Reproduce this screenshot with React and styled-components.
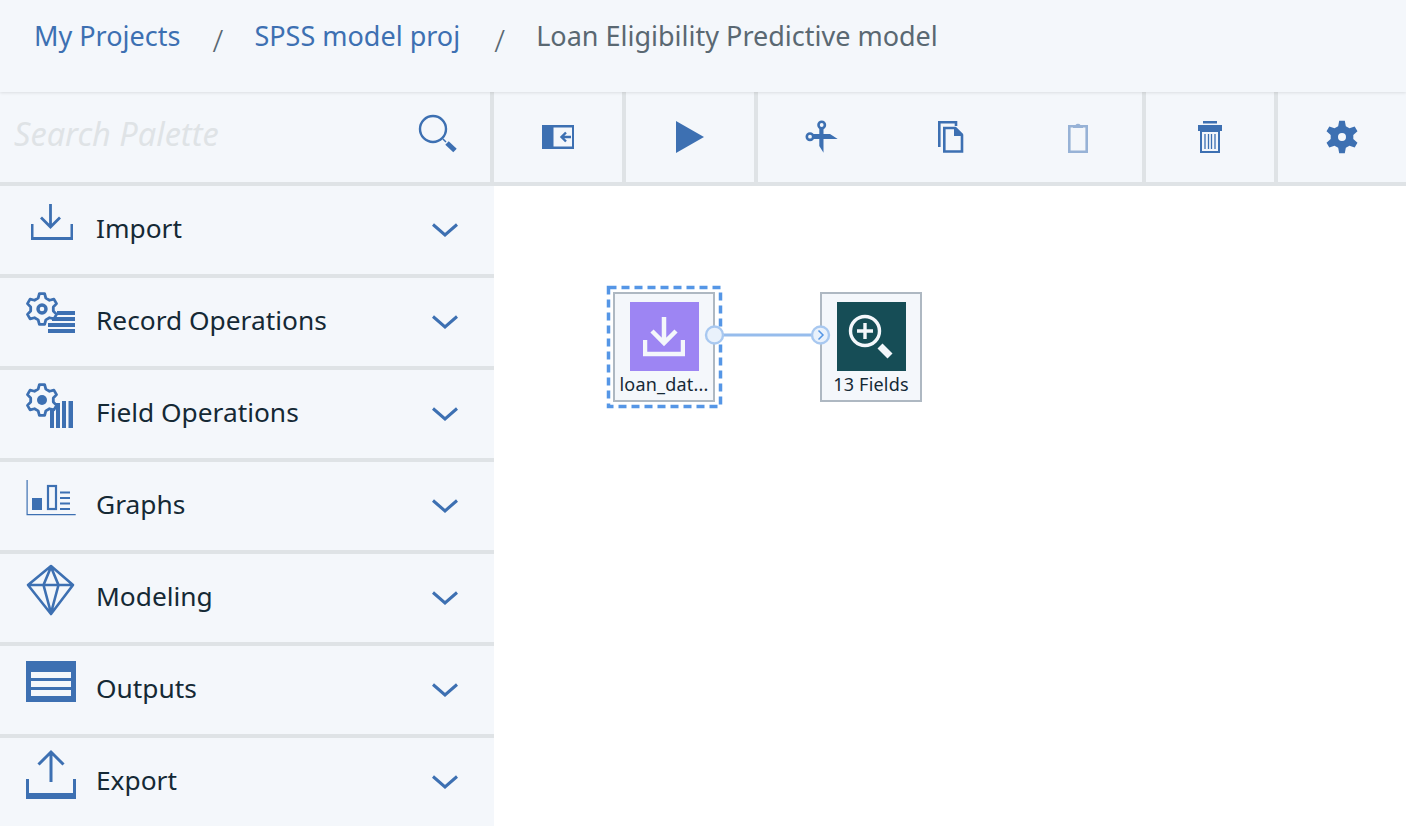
import React from 'react'
import styled, { createGlobalStyle } from 'styled-components'

const BLUE = '#3d70b2'
const PANEL = '#f4f7fb'
const LINE = '#dfe3e6'

const GlobalStyle = createGlobalStyle`
  html, body {
    margin: 0;
    padding: 0;
    background: #fff;
    font-family: "Noto Sans", "Open Sans", sans-serif;
    color: #152935;
  }
`

const Page = styled.div`
  width: 1406px;
  height: 826px;
  overflow: hidden;
  display: flex;
  flex-direction: column;
  background: #fff;
`

const Breadcrumbs = styled.header`
  height: 92px;
  flex: none;
  box-sizing: border-box;
  display: flex;
  align-items: flex-start;
  padding: 17px 0 0 34px;
  background: ${PANEL};
  box-shadow: 0 1px 3px rgba(0, 0, 0, 0.1);
  position: relative;
  z-index: 2;
  font-size: 27px;
  line-height: 38px;
`

const Crumb = styled.a`
  color: ${p => (p.$current ? '#5a6872' : BLUE)};
  white-space: nowrap;
`

const Slash = styled.span`
  width: 42px;
  margin-left: ${p => p.$left}px;
  padding-top: 4px;
  font-size: 31px;
  font-weight: 300;
  color: #5a6872;
`

const Body = styled.div`
  flex: 1;
  display: flex;
  min-height: 0;
`

const Palette = styled.aside`
  width: 494px;
  flex: none;
  display: flex;
  flex-direction: column;
`

const SearchBar = styled.div`
  height: 94px;
  flex: none;
  box-sizing: border-box;
  display: flex;
  align-items: center;
  justify-content: space-between;
  padding: 0 32px 0 14px;
  background: ${PANEL};
  border-bottom: 4px solid ${LINE};
  border-right: 4px solid ${LINE};
`

const SearchHint = styled.span`
  font-size: 32.5px;
  font-style: italic;
  color: ${LINE};
  margin-top: -8px;
`

const SearchIcon = styled.svg`
  width: 40px;
  height: 40px;
  flex: none;
  overflow: visible;
  fill: none;
  stroke: ${BLUE};
`

const Row = styled.div`
  height: 92px;
  flex: none;
  box-sizing: border-box;
  display: flex;
  align-items: center;
  padding: 0 36px 0 24px;
  background: ${PANEL};
  border-bottom: 4px solid ${LINE};
  &:last-child {
    border-bottom-color: ${PANEL};
  }
`

const RowIcon = styled.svg`
  width: 56px;
  height: 60px;
  flex: none;
  overflow: visible;
  fill: ${BLUE};
`

const RowLabel = styled.span`
  flex: 1;
  margin: 0 0 4px 16px;
  font-size: 26.3px;
  line-height: 38px;
`

const Work = styled.main`
  flex: 1;
  display: flex;
  flex-direction: column;
  min-width: 0;
`

const Toolbar = styled.div`
  height: 94px;
  flex: none;
  box-sizing: border-box;
  display: flex;
  background: ${PANEL};
  border-bottom: 4px solid ${LINE};
`

const ToolGroup = styled.div`
  display: flex;
  flex: none;
  & + & {
    border-left: 4px solid ${LINE};
  }
`

const ToolButton = styled.button`
  width: 128px;
  height: 90px;
  padding: 0;
  border: 0;
  background: transparent;
  display: flex;
  align-items: center;
  justify-content: center;
`

const ToolIcon = styled.svg`
  width: 40px;
  height: 40px;
  fill: ${BLUE};
  opacity: ${p => (p.$disabled ? 0.5 : 1)};
`

const Canvas = styled.div`
  flex: 1;
  position: relative;
  background: #fff;
`

const Wires = styled.svg`
  position: absolute;
  left: 0;
  top: 0;
  width: 912px;
  height: 640px;
  pointer-events: none;
  z-index: 1;
`

const Node = styled.div`
  position: absolute;
  left: ${p => p.$x}px;
  top: 106px;
  width: 102px;
  height: 110px;
  box-sizing: border-box;
  border: 2px solid #aeb8c2;
  background: ${PANEL};
  display: flex;
  flex-direction: column;
  align-items: center;
  padding-top: 8px;
`

const NodeImage = styled.div`
  width: 69px;
  height: 69px;
  flex: none;
  background: ${p => p.$color};
  display: flex;
  align-items: center;
  justify-content: center;
`

const NodeLabel = styled.span`
  font-size: 18px;
  line-height: 24px;
  letter-spacing: 0.2px;
  margin-top: 1px;
  white-space: nowrap;
`

const Chevron = () => (
  <svg width="26" height="14" viewBox="0 0 26 14" fill="none" stroke={BLUE} strokeWidth="3">
    <path d="M1 1.5 13 12 25 1.5" />
  </svg>
)

// outline of a six tooth gear, used by the palette icons and the settings button
function gearPath(cx, cy, outer, inner) {
  const pts = []
  for (let i = 0; i < 6; i++) {
    const a = (i * Math.PI) / 3 - Math.PI / 2
    const step = [-0.34, -0.17, 0.17, 0.34]
    const rad = [inner, outer, outer, inner]
    step.forEach((s, k) => {
      pts.push([cx + rad[k] * Math.cos(a + s), cy + rad[k] * Math.sin(a + s)])
    })
  }
  return 'M' + pts.map(p => p[0].toFixed(2) + ' ' + p[1].toFixed(2)).join('L') + 'Z'
}

const importIcon = (
  <>
    <path d="M7 24h2.500v13h37V24H49v16H7z" />
    <path d="M26.500 4v22M17 17.500l9.500 9.500 9.500-9.500" fill="none" stroke={BLUE} strokeWidth="2.800" />
  </>
)

const recordIcon = (
  <>
    <path d={gearPath(18, 17, 15.500, 11.500)} fill="none" stroke={BLUE} strokeWidth="2.800" strokeLinejoin="round" />
    <circle cx="18" cy="17" r="4" fill="none" stroke={BLUE} strokeWidth="3.400" />
    <rect x="33" y="19" width="18" height="4" />
    <rect x="28" y="25" width="23" height="4" />
    <rect x="24" y="31" width="27" height="4" />
    <rect x="24" y="37" width="27" height="4" />
  </>
)

const fieldIcon = (
  <>
    <path d={gearPath(18, 16, 15.500, 11.500)} fill="none" stroke={BLUE} strokeWidth="2.800" strokeLinejoin="round" />
    <circle cx="18" cy="16" r="5" />
    <rect x="26" y="25" width="4" height="19" />
    <rect x="32" y="19" width="4" height="25" />
    <rect x="38" y="17" width="4" height="27" />
    <rect x="44.500" y="17" width="4.500" height="27" />
  </>
)

const graphIcon = (
  <>
    <path d="M2.500 4h1.200v34h48v1.200H2.500z" />
    <rect x="8" y="22" width="10" height="12" />
    <rect x="24" y="10" width="8" height="23" fill="none" stroke={BLUE} strokeWidth="2.200" />
    <path d="M36 16.500h10M36 22h10M36 27.500h10M36 33h10" stroke={BLUE} strokeWidth="2.200" />
  </>
)

const modelIcon = (
  <path
    d="M27 -2 4 17 27 46 49 17ZM4 17H49M27 -1 19.500 17 27 45 34.500 17Z"
    fill="none"
    stroke={BLUE}
    strokeWidth="2.600"
    strokeLinejoin="round"
  />
)

const outputIcon = (
  <>
    <rect x="2" y="1" width="50" height="41" />
    <rect x="7" y="12" width="40" height="6" fill={PANEL} />
    <rect x="7" y="21" width="40" height="6" fill={PANEL} />
    <rect x="7" y="30" width="40" height="6" fill={PANEL} />
  </>
)

const exportIcon = (
  <>
    <path d="M2 27h3v14h44V27h3v20H2z" />
    <path d="M27 0v30M14.500 12.500 27 0l12.500 12.500" fill="none" stroke={BLUE} strokeWidth="3" />
  </>
)

const paletteRows = [
  { label: 'Import', icon: importIcon },
  { label: 'Record Operations', icon: recordIcon },
  { label: 'Field Operations', icon: fieldIcon },
  { label: 'Graphs', icon: graphIcon },
  { label: 'Modeling', icon: modelIcon },
  { label: 'Outputs', icon: outputIcon },
  { label: 'Export', icon: exportIcon },
]

export default function App() {
  return (
    <Page>
      <GlobalStyle />
      <Breadcrumbs>
        <Crumb>My Projects</Crumb>
        <Slash $left={32}>/</Slash>
        <Crumb>SPSS model proj</Crumb>
        <Slash $left={34}>/</Slash>
        <Crumb $current>Loan Eligibility Predictive model</Crumb>
      </Breadcrumbs>
      <Body>
        <Palette>
          <SearchBar>
            <SearchHint>Search Palette</SearchHint>
            <SearchIcon viewBox="0 0 40 40">
              <circle cx="15" cy="12" r="13" strokeWidth="2.400" />
              <path d="M25 22l3 3" strokeWidth="1.500" />
              <path d="M29 26l8 7.500" strokeWidth="5" />
            </SearchIcon>
          </SearchBar>
          {paletteRows.map(r => (
            <Row key={r.label}>
              <RowIcon viewBox="0 0 56 60">{r.icon}</RowIcon>
              <RowLabel>{r.label}</RowLabel>
              <Chevron />
            </Row>
          ))}
        </Palette>
        <Work>
          <Toolbar>
            <ToolGroup>
              <ToolButton>
                <ToolIcon viewBox="0 0 40 40">
                  <path fillRule="evenodd" d="M4 8h32v24H4zM15.500 10.500v19h18.500v-19z" />
                  <path d="M33 20H23.500M28 15.500l-4.500 4.500 4.500 4.500" fill="none" stroke={BLUE} strokeWidth="2.400" />
                </ToolIcon>
              </ToolButton>
            </ToolGroup>
            <ToolGroup>
              <ToolButton>
                <ToolIcon viewBox="0 0 40 40">
                  <path d="M6 4 34 20 6 36z" />
                </ToolIcon>
              </ToolButton>
            </ToolGroup>
            <ToolGroup>
              <ToolButton>
                <ToolIcon viewBox="0 0 40 40">
                  <circle cx="19.700" cy="8" r="3.200" fill="none" stroke={BLUE} strokeWidth="2.600" />
                  <circle cx="8" cy="19.700" r="3.200" fill="none" stroke={BLUE} strokeWidth="2.600" />
                  <path d="M17.300 11h4.200v24.700L17.300 29zM11 17h17l7.700 5H11z" />
                </ToolIcon>
              </ToolButton>
              <ToolButton>
                <ToolIcon viewBox="0 0 40 40">
                  <path d="M9.300 30V5.300H26V9" fill="none" stroke={BLUE} strokeWidth="2.600" />
                  <path d="M14.300 34.500V11H25l7 7v16.500z" fill="none" stroke={BLUE} strokeWidth="2.600" />
                  <path d="M24 10h2l7 7v2h-9z" />
                </ToolIcon>
              </ToolButton>
              <ToolButton>
                <ToolIcon viewBox="0 0 40 40" $disabled>
                  <path d="M11.300 9.300h17.400v25.400H11.300z" fill="none" stroke={BLUE} strokeWidth="2.600" />
                  <path d="M15 8h2.500a3 3 0 0 1 5 0H25v3H15z" />
                </ToolIcon>
              </ToolButton>
            </ToolGroup>
            <ToolGroup>
              <ToolButton>
                <ToolIcon viewBox="0 0 40 40">
                  <rect x="13" y="4" width="14" height="2.500" />
                  <path fillRule="evenodd" d="M8 8h24v6h-2v22H10V14H8zM12 15v19h16V15z" />
                  <path d="M15 17v15M18.500 17v15M21.500 17v15M25 17v15" stroke={BLUE} strokeWidth="1.300" />
                </ToolIcon>
              </ToolButton>
            </ToolGroup>
            <ToolGroup>
              <ToolButton>
                <ToolIcon viewBox="0 0 40 40">
                  <path fillRule="evenodd" d={gearPath(20, 20, 16.500, 11.500) + 'M20 16a4 4 0 1 0 0 8 4 4 0 0 0 0-8z'} />
                </ToolIcon>
              </ToolButton>
            </ToolGroup>
          </Toolbar>
          <Canvas>
            <Node $x={119}>
              <NodeImage $color="#9d85f3">
                <svg width="42" height="42" viewBox="0 0 42 42" fill="none" stroke={PANEL} strokeWidth="4.500">
                  <path d="M21 1v26M9 15l12 12 12-12" />
                  <path d="M2 24v14h38V24" />
                </svg>
              </NodeImage>
              <NodeLabel>loan_dat...</NodeLabel>
            </Node>
            <Node $x={326}>
              <NodeImage $color="#164d56">
                <svg width="46" height="48" viewBox="0 0 46 48" fill="none" stroke={PANEL}>
                  <circle cx="17" cy="18" r="14.500" strokeWidth="3.400" />
                  <path d="M9 18h16M17 10v16" strokeWidth="3.400" />
                  <path d="M32 33l10 10" strokeWidth="7" />
                </svg>
              </NodeImage>
              <NodeLabel>13 Fields</NodeLabel>
            </Node>
            <Wires viewBox="0 0 912 640">
              <rect
                x="114.500"
                y="101.500"
                width="112"
                height="119"
                fill="none"
                stroke="#5596e6"
                strokeWidth="3.500"
                strokeDasharray="8 5"
              />
              <path d="M229 149h90" stroke="#96bcec" strokeWidth="3" />
              <circle cx="220.500" cy="149" r="8.500" fill="#e9f1fb" stroke="#a8c8f0" strokeWidth="2.400" />
              <circle cx="326.500" cy="149" r="8.500" fill="#e9f1fb" stroke="#a8c8f0" strokeWidth="2.400" />
              <path d="M324.500 144.500l4.500 4.500-4.500 4.500" fill="none" stroke="#5596e6" strokeWidth="1.500" />
            </Wires>
          </Canvas>
        </Work>
      </Body>
    </Page>
  )
}
